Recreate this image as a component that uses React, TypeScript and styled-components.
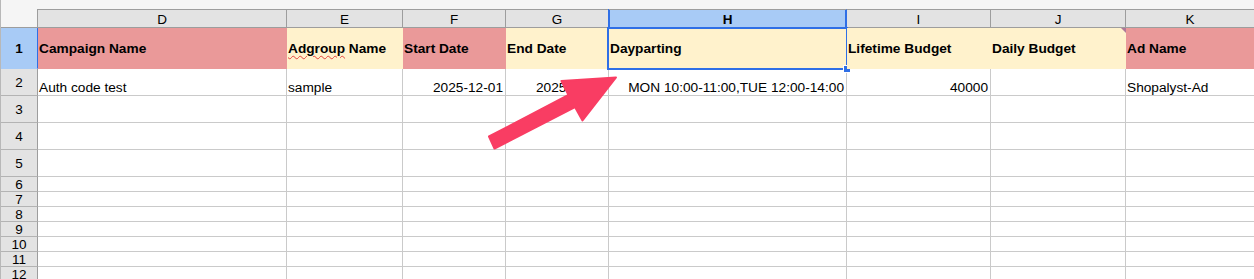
import React from 'react';
import { styled, createGlobalStyle } from 'styled-components';

const GlobalStyle = createGlobalStyle`
  body {
    margin: 0;
    background: #ffffff;
    font-family: "Liberation Sans", Arial, sans-serif;
  }
`;

type Fill = 'red' | 'yellow';
type Align = 'left' | 'right';

type Column = {
  letter: string;
  width: number;
  title: string;
  fill: Fill;
  value: string;
  align: Align;
  spell?: boolean;
  note?: boolean;
};

const columns: Column[] = [
  { letter: 'D', width: 249, title: 'Campaign Name', fill: 'red', value: 'Auth code test', align: 'left' },
  { letter: 'E', width: 116, title: 'Adgroup Name', fill: 'yellow', value: 'sample', align: 'left', spell: true },
  { letter: 'F', width: 103, title: 'Start Date', fill: 'red', value: '2025-12-01', align: 'right' },
  { letter: 'G', width: 103, title: 'End Date', fill: 'yellow', value: '2025-12-31', align: 'right' },
  { letter: 'H', width: 238, title: 'Dayparting', fill: 'yellow', value: 'MON 10:00-11:00,TUE 12:00-14:00', align: 'right' },
  { letter: 'I', width: 144, title: 'Lifetime Budget', fill: 'yellow', value: '40000', align: 'right' },
  { letter: 'J', width: 135, title: 'Daily Budget', fill: 'yellow', value: '', align: 'left', note: true },
  { letter: 'K', width: 129, title: 'Ad Name', fill: 'red', value: 'Shopalyst-Ad', align: 'left' },
];

const ACTIVE_COL = 'H';
const ACTIVE_ROW = 1;

// heights of rows 3..12, border included
const emptyRows = [
  { n: 3, h: 27 },
  { n: 4, h: 27 },
  { n: 5, h: 27 },
  { n: 6, h: 15 },
  { n: 7, h: 15 },
  { n: 8, h: 15 },
  { n: 9, h: 15 },
  { n: 10, h: 15 },
  { n: 11, h: 15 },
  { n: 12, h: 15 },
];

const colors = {
  red: '#ea9999',
  yellow: '#fff2cc',
  headBg: '#e3e3e3',
  headLine: '#9d9d9d',
  activeHead: '#a8cbf6',
  grid: '#cacaca',
  blue: '#2f6fe6',
  top: '#f5f5f5',
};

export default function App() {
  const template = `37px ${columns.map((c) => `${c.width}px`).join(' ')}`;

  return (
    <>
      <GlobalStyle />
      <Page>
        <TopStrip />
        <Sheet style={{ gridTemplateColumns: template }}>
          {/* column letters */}
          <Corner />
          {columns.map((c) => (
            <ColHead key={c.letter} $active={c.letter === ACTIVE_COL}>
              {c.letter}
            </ColHead>
          ))}

          {/* row 1: titles */}
          <RowHead $h={41} $active={ACTIVE_ROW === 1}>
            1
          </RowHead>
          {columns.map((c) => (
            <TitleCell key={c.letter} $fill={c.fill} $note={!!c.note}>
              {c.spell ? (
                <span>
                  <Misspelt>Adgroup</Misspelt> Name
                </span>
              ) : (
                c.title
              )}
              {c.letter === ACTIVE_COL && (
                <Selection>
                  <Handle />
                </Selection>
              )}
            </TitleCell>
          ))}

          {/* row 2: values */}
          <RowHead $h={27}>2</RowHead>
          {columns.map((c) => (
            <Cell key={c.letter} $h={27} $align={c.align}>
              {c.value}
            </Cell>
          ))}

          {emptyRows.map((r) => (
            <React.Fragment key={r.n}>
              <RowHead $h={r.h}>{r.n}</RowHead>
              {columns.map((c) => (
                <Cell key={c.letter} $h={r.h} $align="left" />
              ))}
            </React.Fragment>
          ))}
        </Sheet>

        <Arrow viewBox="0 0 1254 279" width="1254" height="279">
          <polygon
            points="489,136.5 568.5,95 561.5,81 616,77.5 582.5,120.5 575,107 494.5,148.5"
            fill="#f93d63"
            stroke="#f93d63"
            strokeWidth="2"
            strokeLinejoin="round"
          />
        </Arrow>
      </Page>
    </>
  );
}

const Page = styled.div`
  position: relative;
  width: 1254px;
  height: 279px;
  overflow: hidden;
  background: #ffffff;
  border-left: 1px solid #b8b8b8;
  box-sizing: border-box;
`;

const TopStrip = styled.div`
  height: 9px;
  background: ${colors.top};
`;

const Sheet = styled.div`
  display: grid;
  font-size: 13.7px;
  color: #000;
`;

const Corner = styled.div`
  height: 19px;
  box-sizing: border-box;
  background: ${colors.top};
  border-right: 1px solid ${colors.headLine};
  border-bottom: 1px solid ${colors.headLine};
`;

const ColHead = styled.div<{ $active: boolean }>`
  height: 19px;
  box-sizing: border-box;
  display: flex;
  align-items: center;
  justify-content: center;
  font-size: 13.5px;
  font-weight: ${({ $active }) => ($active ? 700 : 400)};
  background: ${({ $active }) => ($active ? colors.activeHead : colors.headBg)};
  border-top: 1px solid ${colors.headLine};
  border-right: 1px solid ${({ $active }) => ($active ? colors.blue : colors.headLine)};
  border-bottom: 1px solid ${({ $active }) => ($active ? colors.blue : colors.headLine)};
  box-shadow: ${({ $active }) =>
    $active
      ? `-1px 0 0 ${colors.blue}, inset 1px 0 0 ${colors.blue}, inset -1px 0 0 ${colors.blue}`
      : 'none'};
  padding-top: 1px;
`;

const RowHead = styled.div<{ $h: number; $active?: boolean }>`
  height: ${({ $h }) => $h}px;
  box-sizing: border-box;
  display: flex;
  align-items: center;
  justify-content: center;
  overflow: hidden;
  font-size: 13.5px;
  line-height: 15px;
  font-weight: ${({ $active }) => ($active ? 700 : 400)};
  background: ${({ $active }) => ($active ? colors.activeHead : colors.headBg)};
  border-right: 1px solid ${({ $active }) => ($active ? colors.blue : colors.headLine)};
  border-bottom: 1px solid ${({ $active }) => ($active ? colors.activeHead : '#b3b3b3')};
`;

const TitleCell = styled.div<{ $fill: Fill; $note: boolean }>`
  position: relative;
  height: 41px;
  box-sizing: border-box;
  display: flex;
  align-items: center;
  padding: 0 2px 0 1px;
  font-weight: 700;
  white-space: nowrap;
  background: ${({ $fill }) => colors[$fill]};

  &::after {
    content: '';
    display: ${({ $note }) => ($note ? 'block' : 'none')};
    position: absolute;
    top: 0;
    right: 0;
    border-style: solid;
    border-width: 0 5px 5px 0;
    border-color: transparent #b0799a transparent transparent;
  }
`;

const Misspelt = styled.span`
  text-decoration: underline wavy #e5433d;
  text-decoration-thickness: 1px;
  text-underline-offset: 2px;
`;

const Selection = styled.div`
  position: absolute;
  top: -1px;
  left: -2px;
  right: -1px;
  bottom: -1px;
  border: 2px solid ${colors.blue};
  pointer-events: none;
`;

const Handle = styled.div`
  position: absolute;
  right: -5px;
  bottom: -5px;
  width: 6px;
  height: 6px;
  background: ${colors.blue};
  border: 1px solid #ffffff;
`;

const Cell = styled.div<{ $h: number; $align: Align }>`
  height: ${({ $h }) => $h}px;
  box-sizing: border-box;
  display: flex;
  align-items: flex-end;
  justify-content: ${({ $align }) => ($align === 'right' ? 'flex-end' : 'flex-start')};
  padding: 0 2px 0 1px;
  white-space: nowrap;
  overflow: hidden;
  border-right: 1px solid ${colors.grid};
  border-bottom: 1px solid ${colors.grid};
`;

const Arrow = styled.svg`
  position: absolute;
  top: 0;
  left: -1px;
  pointer-events: none;
`;
